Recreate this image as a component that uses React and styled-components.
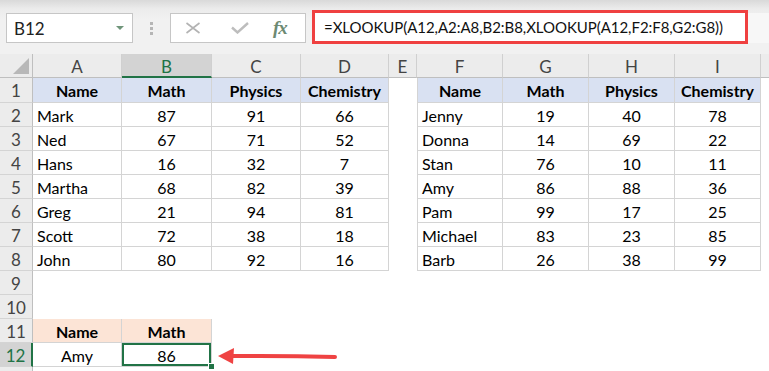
import React from 'react';
import styled, { createGlobalStyle, css } from 'styled-components';

const FONT = `Lato, "Liberation Sans", Arial, sans-serif`;

const Global = createGlobalStyle`
  html, body { margin: 0; padding: 0; background: #fff; overflow: hidden; }
  body { font-family: ${FONT}; }
`;

const Page = styled.div`
  position: relative;
  width: 769px;
  height: 371px;
  overflow: hidden;
  background: #fff;
  font-family: ${FONT};
`;

const Toolbar = styled.div`
  height: 54px;
  box-sizing: border-box;
  display: flex;
  align-items: flex-start;
  padding: 13px 0 0 6px;
  background: linear-gradient(#d9d9d9 0px, #ececec 9px, #f1f1f1 20px, #f1f1f1 100%);
`;

const NameBox = styled.div`
  width: 127px;
  height: 30px;
  box-sizing: border-box;
  border: 1px solid #c6c6c6;
  background: #fff;
  display: flex;
  align-items: center;
  justify-content: space-between;
  padding: 0 8px 0 7px;
  font-size: 17px;
  color: #222;
`;

const Caret = styled.span`
  width: 0;
  height: 0;
  border-left: 4px solid transparent;
  border-right: 4px solid transparent;
  border-top: 4px solid #6f957a;
`;

const Grip = styled.div`
  width: 37px;
  height: 30px;
  display: flex;
  flex-direction: column;
  align-items: center;
  justify-content: center;
  gap: 2px;
`;

const GripDot = styled.span`
  width: 3px;
  height: 3px;
  background: #b5b5b5;
`;

const FuncBox = styled.div`
  width: 136px;
  height: 30px;
  box-sizing: border-box;
  border: 1px solid #c6c6c6;
  background: #fff;
  display: flex;
  align-items: center;
  padding: 0 0 0 14px;
`;

const FuncIcon = styled.span`
  width: ${p => p.$w}px;
  display: flex;
  align-items: center;
  justify-content: flex-start;
`;

const Fx = styled.span`
  font-family: "Liberation Serif", "DejaVu Serif", serif;
  font-style: italic;
  font-weight: 700;
  font-size: 19px;
  color: #6d8a73;
  letter-spacing: -1px;
`;

const FormulaBox = styled.div`
  margin: -3px 0 0 6px;
  width: 436px;
  height: 34px;
  box-sizing: border-box;
  border: 3px solid #ef4040;
  background: #fff;
  display: flex;
  align-items: center;
  padding: 0 0 0 9px;
  font-size: 15px;
  letter-spacing: -0.05px;
  color: #111;
  white-space: nowrap;
  overflow: hidden;
`;

const FormulaRest = styled.div`
  flex: 1;
  height: 30px;
  background: #f7f7f7;
`;

const Sheet = styled.div`
  display: grid;
  grid-template-columns: 33px 89px 90px 89px 88px 28px 86px 86px 86px 86px 1fr;
  grid-template-rows: 24px 25px repeat(12, 24px);
  font-size: 16px;
  color: #000;
`;

const Corner = styled.div`
  position: relative;
  background: #ececec;
  border-right: 1px solid #bfbfbf;
  border-bottom: 1px solid #bfbfbf;
  box-sizing: border-box;
`;

const CornerTri = styled.span`
  position: absolute;
  right: 3px;
  bottom: 3px;
  width: 0;
  height: 0;
  border-left: 16px solid transparent;
  border-bottom: 16px solid #b8b8b8;
`;

const ColHead = styled.div`
  box-sizing: border-box;
  display: flex;
  align-items: center;
  justify-content: center;
  padding-top: 2px;
  font-size: 17px;
  color: ${p => (p.$active ? '#217346' : '#444')};
  background: ${p => (p.$active ? '#d3d3d3' : '#ececec')};
  border-right: 1px solid #d0d0d0;
  border-bottom: ${p => (p.$active ? '2px solid #217346' : '1px solid #bfbfbf')};
`;

const RowHead = styled.div`
  box-sizing: border-box;
  display: flex;
  align-items: center;
  justify-content: center;
  padding-top: 1px;
  font-size: 17px;
  color: ${p => (p.$active ? '#217346' : '#444')};
  background: ${p => (p.$active ? '#d3d3d3' : '#ececec')};
  border-bottom: 1px solid #d4d4d4;
  border-right: ${p => (p.$active ? '2px solid #217346' : '1px solid #bfbfbf')};
`;

const FILLS = { blue: '#d9e1f2', peach: '#fce4d6' };
const GRID = '#d4d4d4';

const Cell = styled.div`
  position: relative;
  box-sizing: border-box;
  display: flex;
  align-items: center;
  justify-content: ${p => (p.$align === 'left' ? 'flex-start' : 'center')};
  padding: 1px 4px 0;
  white-space: nowrap;
  font-weight: ${p => (p.$bold ? 700 : 400)};
  background: ${p => FILLS[p.$fill] || '#fff'};
  border-right: 1px solid ${p => (p.$border ? GRID : 'transparent')};
  border-bottom: 1px solid ${p => (p.$border ? GRID : 'transparent')};
  ${p => p.$edge && css`border-left: 1px solid ${GRID};`}
  ${p =>
    p.$selected &&
    css`
      z-index: 2;
      box-shadow: inset 0 0 0 2px #217346;
      &::after {
        content: '';
        position: absolute;
        right: -4px;
        bottom: -4px;
        width: 5px;
        height: 5px;
        background: #217346;
        border: 1px solid #fff;
      }
    `}
`;

const Arrow = styled.svg`
  position: absolute;
  left: 216px;
  top: 345px;
  pointer-events: none;
`;

const COLS = ['A', 'B', 'C', 'D', 'E', 'F', 'G', 'H', 'I'];
const HEAD = ['Name', 'Math', 'Physics', 'Chemistry'];
const LEFT = [
  ['Mark', 87, 91, 66],
  ['Ned', 67, 71, 52],
  ['Hans', 16, 32, 7],
  ['Martha', 68, 82, 39],
  ['Greg', 21, 94, 81],
  ['Scott', 72, 38, 18],
  ['John', 80, 92, 16],
];
const RIGHT = [
  ['Jenny', 19, 40, 78],
  ['Donna', 14, 69, 22],
  ['Stan', 76, 10, 11],
  ['Amy', 86, 88, 36],
  ['Pam', 99, 17, 25],
  ['Michael', 83, 23, 85],
  ['Barb', 26, 38, 99],
];

function tableCells(row, col, data, edge) {
  if (row === 1) {
    return { text: HEAD[col], bold: true, fill: 'blue', border: true, align: 'center', edge };
  }
  const v = data[row - 2][col];
  return { text: v, border: true, align: col === 0 ? 'left' : 'center', edge };
}

function cellFor(row, ci) {
  if (row >= 1 && row <= 8) {
    if (ci <= 3) return tableCells(row, ci, LEFT, false);
    if (ci >= 5 && ci <= 8) return tableCells(row, ci - 5, RIGHT, ci === 5);
    return {};
  }
  if (row === 11 && ci <= 1) {
    return { text: ci === 0 ? 'Name' : 'Math', bold: true, fill: 'peach', border: true };
  }
  if (row === 12 && ci <= 1) {
    return ci === 0 ? { text: 'Amy', border: true } : { text: 86, border: true, selected: true };
  }
  return {};
}

export default function App() {
  const rows = Array.from({ length: 13 }, (_, i) => i + 1);
  return (
    <Page>
      <Global />
      <Toolbar>
        <NameBox>
          <span>B12</span>
          <Caret />
        </NameBox>
        <Grip>
          <GripDot />
          <GripDot />
          <GripDot />
        </Grip>
        <FuncBox>
          <FuncIcon $w={46}>
            <svg width="16" height="12" viewBox="0 0 16 12">
              <path d="M1.5 1 L14.5 11 M14.5 1 L1.5 11" stroke="#b3b3b3" strokeWidth="1.6" fill="none" />
            </svg>
          </FuncIcon>
          <FuncIcon $w={42}>
            <svg width="18" height="12" viewBox="0 0 18 12">
              <path d="M1 5.5 L6.5 10.5 L17 1" stroke="#bdbdbd" strokeWidth="2.4" fill="none" />
            </svg>
          </FuncIcon>
          <Fx>fx</Fx>
        </FuncBox>
        <FormulaBox>=XLOOKUP(A12,A2:A8,B2:B8,XLOOKUP(A12,F2:F8,G2:G8))</FormulaBox>
        <FormulaRest />
      </Toolbar>
      <Sheet>
        <Corner>
          <CornerTri />
        </Corner>
        {COLS.map(c => (
          <ColHead key={c} $active={c === 'B'}>
            {c}
          </ColHead>
        ))}
        <ColHead />
        {rows.map(r => (
          <React.Fragment key={r}>
            <RowHead $active={r === 12}>{r <= 12 ? r : ''}</RowHead>
            {COLS.map((c, ci) => {
              const d = cellFor(r, ci);
              return (
                <Cell
                  key={c}
                  $align={d.align}
                  $bold={d.bold}
                  $fill={d.fill}
                  $border={d.border}
                  $edge={d.edge}
                  $selected={d.selected}
                >
                  {d.text}
                </Cell>
              );
            })}
            <Cell />
          </React.Fragment>
        ))}
      </Sheet>
      <Arrow width="124" height="22" viewBox="0 0 124 22">
        <path d="M2 11 L18 3 L17 19 Z" fill="#ef4343" />
        <path d="M16 11 Q70 10.5 119 12" stroke="#ef4343" strokeWidth="4" strokeLinecap="round" fill="none" />
      </Arrow>
    </Page>
  );
}
